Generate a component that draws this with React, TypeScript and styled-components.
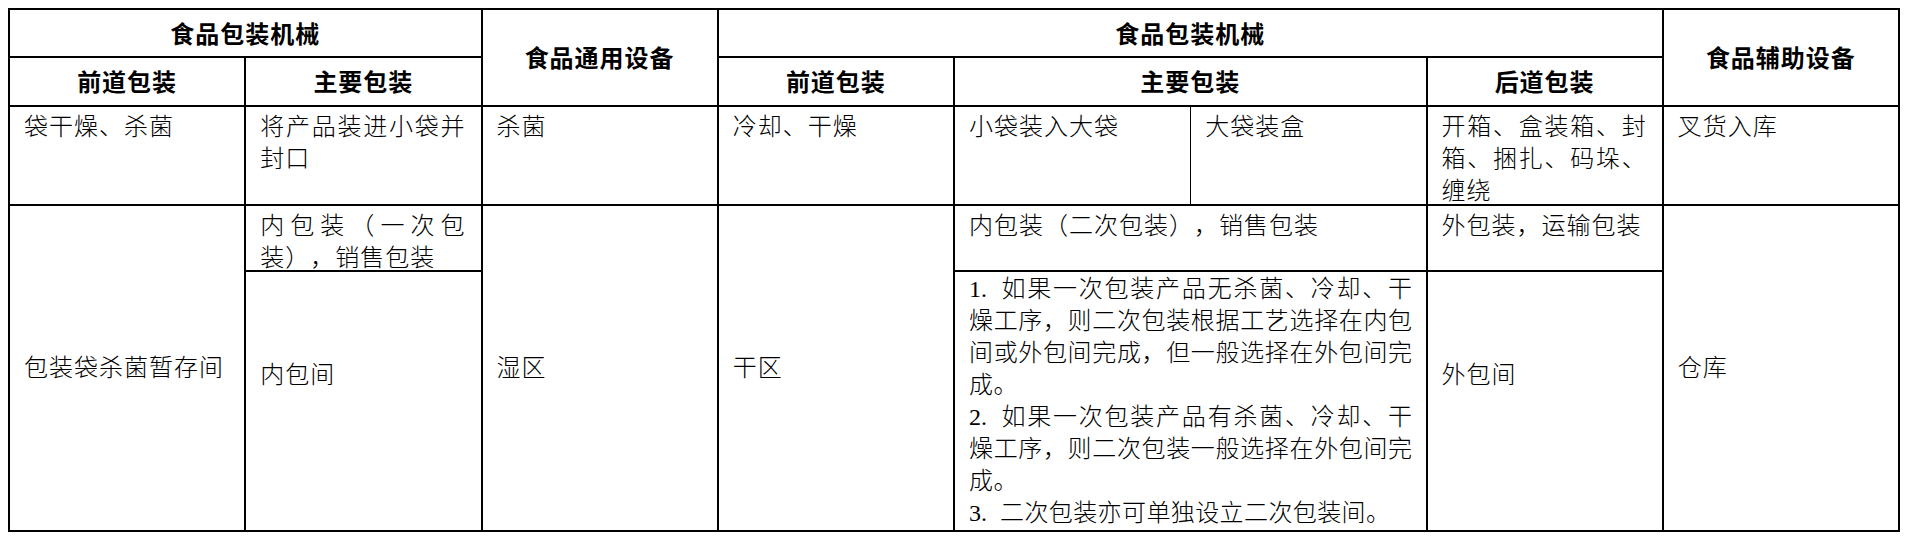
import { ReactElement, ReactNode } from 'react';
import styled, { createGlobalStyle } from 'styled-components';

// note text is broken into the same visual lines as the printed table
type NoteLineData = { marker?: string; text: string };

const NOTE_PARAGRAPHS: NoteLineData[][] = [
    [
        { marker: '1.', text: '如果一次包装产品无杀菌、冷却、干' },
        { text: '燥工序，则二次包装根据工艺选择在内包' },
        { text: '间或外包间完成，但一般选择在外包间完' },
        { text: '成。' },
    ],
    [
        { marker: '2.', text: '如果一次包装产品有杀菌、冷却、干' },
        { text: '燥工序，则二次包装一般选择在外包间完' },
        { text: '成。' },
    ],
    [{ marker: '3.', text: '二次包装亦可单独设立二次包装间。' }],
];

const GlobalStyle = createGlobalStyle`
    html,
    body {
        margin: 0;
        background: #fff;
    }
    body {
        padding: 8px 0 0 8px;
        color: #000;
        font-family: 'Liberation Serif', 'Noto Sans CJK SC', serif;
    }
`;

const Sheet = styled.div`
    display: grid;
    grid-template-columns: repeat(8, 236.25px);
    grid-template-rows: 48px 49px 99px 66px 260px;
    width: 1890px;
    border-top: 2px solid #000;
    border-left: 2px solid #000;
`;

type CellProps = {
    $cols?: number;
    $rows?: number;
    $thin?: boolean;
};

const Cell = styled.div<CellProps>`
    grid-column: span ${(p) => p.$cols ?? 1};
    grid-row: span ${(p) => p.$rows ?? 1};
    box-sizing: border-box;
    min-width: 0;
    border-right: ${(p) => (p.$thin ? 1 : 2)}px solid #000;
    border-bottom: 2px solid #000;
    padding: 4px 15px 0 14px;
    font-size: 24px;
    line-height: 32px;
    letter-spacing: 1px;
    text-align: justify;
    text-spacing-trim: space-all;
    font-weight: 300;
`;

const HeadCell = styled(Cell)`
    display: flex;
    align-items: center;
    justify-content: center;
    padding: 3px 0 0;
    font-weight: 700;
`;

const MiddleCell = styled(Cell)<{ $lift?: number }>`
    display: flex;
    align-items: center;
    padding-top: 0;
    padding-bottom: ${(p) => p.$lift ?? 0}px;
`;

const NoteCell = styled(Cell)`
    padding: 1px 13px 0 14px;
    letter-spacing: 0.4px;
`;

const NoteLine = styled.span<{ $last?: boolean }>`
    display: block;
    white-space: nowrap;
    text-align: ${(p) => (p.$last ? 'left' : 'justify')};
    text-align-last: ${(p) => (p.$last ? 'left' : 'justify')};
`;

const Marker = styled.span`
    display: inline-block;
    width: 31px;
    letter-spacing: 0;
`;

const Note = (): ReactElement => (
    <NoteCell $cols={2}>
        {NOTE_PARAGRAPHS.map((lines) =>
            lines.map((line, i) => (
                <NoteLine key={line.text} $last={i === lines.length - 1}>
                    {line.marker && <Marker>{line.marker} </Marker>}
                    {line.text}
                </NoteLine>
            )),
        )}
    </NoteCell>
);

const Head = ({ children, cols, rows }: { children: ReactNode; cols?: number; rows?: number }) => (
    <HeadCell $cols={cols} $rows={rows}>
        {children}
    </HeadCell>
);

const App = (): ReactElement => (
    <>
        <GlobalStyle />
        <Sheet>
            {/* header */}
            <Head cols={2}>食品包装机械</Head>
            <Head rows={2}>食品通用设备</Head>
            <Head cols={4}>食品包装机械</Head>
            <Head rows={2}>食品辅助设备</Head>
            <Head>前道包装</Head>
            <Head>主要包装</Head>
            <Head>前道包装</Head>
            <Head cols={2}>主要包装</Head>
            <Head>后道包装</Head>

            {/* processes */}
            <Cell>袋干燥、杀菌</Cell>
            <Cell>将产品装进小袋并封口</Cell>
            <Cell>杀菌</Cell>
            <Cell>冷却、干燥</Cell>
            <Cell $thin>小袋装入大袋</Cell>
            <Cell>大袋装盒</Cell>
            <Cell>开箱、盒装箱、封箱、捆扎、码垛、缠绕</Cell>
            <Cell>叉货入库</Cell>

            {/* rooms */}
            <MiddleCell $rows={2}>包装袋杀菌暂存间</MiddleCell>
            <Cell>内包装（一次包装），销售包装</Cell>
            <MiddleCell $rows={2}>湿区</MiddleCell>
            <MiddleCell $rows={2}>干区</MiddleCell>
            <Cell $cols={2}>内包装（二次包装），销售包装</Cell>
            <Cell>外包装，运输包装</Cell>
            <MiddleCell $rows={2}>仓库</MiddleCell>
            <MiddleCell $lift={52}>内包间</MiddleCell>
            <Note />
            <MiddleCell $lift={52}>外包间</MiddleCell>
        </Sheet>
    </>
);

export default App;
